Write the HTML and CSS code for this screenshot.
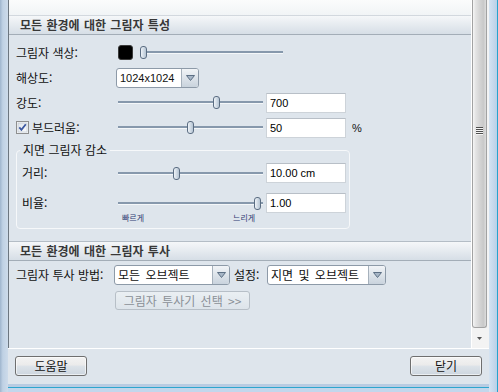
FILE: index.html
```html
<!DOCTYPE html>
<html lang="ko">
<head>
<meta charset="utf-8">
<title>그림자 특성</title>
<link rel="stylesheet" href="styles.css">
</head>
<body>
<div class="frame-left"></div>
<div class="main">
  <div class="pane">
    <div class="content">
      <div class="top-strip"></div>
      <div class="section-head">모든 환경에 대한 그림자 특성</div>
      <div class="form">
        <div class="row">
          <span class="label">그림자 색상:</span>
          <span class="swatch"></span>
          <div class="slider slider-color"><span class="thumb" style="left:0px"></span></div>
        </div>
        <div class="row">
          <span class="label label-select">해상도:</span>
          <div class="select select-res">
            <span class="select-text latin">1024x1024</span>
            <span class="select-btn"><svg width="9" height="6" viewBox="0 0 9 6"><polygon points="0.5,0.5 8.5,0.5 4.5,5.5" fill="#a7b6c6" stroke="#5c6f84" stroke-width="1"/></svg></span>
          </div>
        </div>
        <div class="row">
          <span class="label">강도:</span>
          <div class="slider"><span class="thumb" style="left:95px"></span></div>
          <input class="num" type="text" value="700">
        </div>
        <div class="row">
          <label class="label check-label">
            <svg class="checkbox" width="13" height="13" viewBox="0 0 13 13"><defs><linearGradient id="cb" x1="0" y1="0" x2="1" y2="1"><stop offset="0" stop-color="#dfe4ea"/><stop offset="1" stop-color="#fbfcfd"/></linearGradient></defs><rect x="0.5" y="0.5" width="12" height="12" fill="#f6f7f8" stroke="#8e8f8f"/><rect x="2" y="2" width="9" height="9" fill="url(#cb)" stroke="#b9c2cc" stroke-width="0.6"/><path d="M3.3 6.4 L5.4 8.8 L9.8 3.2" fill="none" stroke="#3c58a0" stroke-width="1.8"/></svg>
            <span>부드러움:</span>
          </label>
          <div class="slider"><span class="thumb" style="left:69px"></span></div>
          <input class="num" type="text" value="50">
          <span class="unit latin">%</span>
        </div>
        <fieldset class="group">
          <legend>지면 그림자 감소</legend>
          <div class="row group-row row-dist">
            <span class="label label-group">거리:</span>
            <div class="slider"><span class="thumb" style="left:55px"></span></div>
            <input class="num" type="text" value="10.00 cm">
          </div>
          <div class="row group-row row-ratio">
            <span class="label label-group">비율:</span>
            <div class="slider"><span class="thumb" style="left:136px"></span></div>
            <input class="num" type="text" value="1.00">
          </div>
          <div class="scale">
            <span>빠르게</span>
            <span>느리게</span>
          </div>
        </fieldset>
      </div>
      <div class="section-head section-head-2">모든 환경에 대한 그림자 투사</div>
      <div class="form form-2">
        <div class="row row-cast">
          <span class="label label-cast">그림자 투사 방법:</span>
          <div class="select select-cast">
            <span class="select-text">모든 오브젝트</span>
            <span class="select-btn"><svg width="9" height="6" viewBox="0 0 9 6"><polygon points="0.5,0.5 8.5,0.5 4.5,5.5" fill="#a7b6c6" stroke="#5c6f84" stroke-width="1"/></svg></span>
          </div>
          <span class="label-set">설정:</span>
          <div class="select select-set">
            <span class="select-text">지면 및 오브젝트</span>
            <span class="select-btn"><svg width="9" height="6" viewBox="0 0 9 6"><polygon points="0.5,0.5 8.5,0.5 4.5,5.5" fill="#a7b6c6" stroke="#5c6f84" stroke-width="1"/></svg></span>
          </div>
        </div>
        <div class="btn-disabled">그림자 투사기 선택 &gt;&gt;</div>
      </div>
    </div>
    <div class="scrollbar">
      <div class="sb-thumb">
        <span class="grip"></span>
      </div>
      <div class="sb-arrow"><svg width="5" height="3" viewBox="0 0 5 3"><polygon points="0,0 5,0 2.5,3" fill="#555"/></svg></div>
    </div>
  </div>
  <div class="footer">
    <div class="btn">도움말</div>
    <div class="btn">닫기</div>
  </div>
  <div class="frame-bottom"></div>
</div>
<div class="frame-right"></div>
</body>
</html>
```
FILE: styles.css
```css
* { box-sizing: border-box; }
html, body { margin: 0; padding: 0; }
body {
  width: 498px;
  height: 392px;
  overflow: hidden;
  display: flex;
  background: #bcd3ea;
  font-family: "Noto Sans CJK KR", "Noto Sans", sans-serif;
  font-size: 12px;
  color: #111;
}
.latin { font-family: "Liberation Sans", Arial, sans-serif; font-size: 11px; }

.frame-left {
  width: 8px;
  flex: none;
  background: linear-gradient(to right, #9fb5cd 0, #bfd1e4 35%, #cddbea 100%);
}
.frame-right {
  width: 9px;
  flex: none;
  background: linear-gradient(to right, #d5e3f1, #b9d0e8);
  border-right: 1px solid #27a3cd;
}
.main {
  width: 481px;
  flex: none;
  display: flex;
  flex-direction: column;
}
.pane {
  height: 348px;
  display: flex;
  border-left: 1px solid #6c7680;
}
.content {
  width: 462px;
  background: #dee5ec;
}
.top-strip {
  height: 15px;
  background: linear-gradient(#fbfcfc, #f1f4f6);
}
.section-head {
  height: 20px;
  border-top: 1px solid #d2d8de;
  border-bottom: 1px solid #a3adb7;
  background: linear-gradient(#f5f7f9, #d6dee6);
  padding-left: 11px;
  font-weight: bold;
  line-height: 18px;
  color: #383838;
  word-spacing: 1px;
}
.section-head-2 {
  margin-top: 12px;
  border-top-color: #b4bdc6;
}

.form { padding: 5px 0 0 7px; }
.row {
  display: flex;
  align-items: center;
  height: 25px;
}
.label {
  width: 102px;
  flex: none;
  line-height: 16px;
  white-space: nowrap;
}
.label-select { width: 100px; }
.label-group { width: 96px; }

.swatch {
  width: 15px;
  height: 15px;
  flex: none;
  background: #000;
  border: 1px solid #3a3a3a;
  border-radius: 3px;
}
.slider {
  position: relative;
  width: 145px;
  height: 13px;
  flex: none;
}
.slider-color { width: 143px; margin-left: 7px; }
.slider::before {
  content: "";
  position: absolute;
  left: 0;
  right: 0;
  top: 5px;
  height: 2px;
  background: #8698ac;
  box-shadow: 0 1px 0 #f4f7f9;
}
.thumb {
  position: absolute;
  top: 0;
  width: 7px;
  height: 13px;
  border: 1px solid #5b6d82;
  border-radius: 3px;
  background: linear-gradient(to right, #eef3f8, #b5c4d3);
}
.num {
  width: 80px;
  height: 20px;
  margin: 0 0 0 3px;
  padding: 0 0 0 3px;
  background: #fff;
  border: 1px solid #cdd3d9;
  border-top-color: #b8bfc7;
  font: 11px "Liberation Sans", Arial, sans-serif;
  line-height: 18px;
  color: #000;
  outline: none;
  flex: none;
}
.unit { margin-left: 6px; }

.check-label {
  display: flex;
  align-items: center;
  gap: 3px;
}
.checkbox { flex: none; }

.select {
  display: flex;
  height: 20px;
  border: 1px solid #8d9aa8;
  border-radius: 3px;
  background: #fff;
  flex: none;
  overflow: hidden;
}
.select-text {
  flex: 1;
  padding-left: 3px;
  line-height: 18px;
  white-space: nowrap;
  word-spacing: 2px;
}
.select-btn {
  width: 17px;
  flex: none;
  border-left: 1px solid #a6b1bc;
  background: linear-gradient(#f1f4f7, #c9d3dd);
  display: flex;
  align-items: center;
  justify-content: center;
}
.select-res { width: 83px; }

.group {
  margin: 2px 0 0 0;
  padding: 0 0 5px 5px;
  width: 334px;
  min-width: 0;
  border: 1px solid #f6f8fa;
  border-radius: 4px;
}
.group legend {
  padding: 0 3px;
  margin-left: -2px;
  line-height: 16px;
}
.group-row { height: 20px; }
.row-dist { margin-top: 5px; }
.row-ratio { margin-top: 10px; }
.scale {
  display: flex;
  height: 10px;
  padding-left: 100px;
  gap: 89px;
  font-size: 8px;
  line-height: 10px;
  color: #2f3c72;
}

.form-2 { padding-top: 4px; }
.row-cast { height: 20px; }
.label-cast { width: 98px; }
.select-cast { width: 116px; }
.label-set { width: 33px; margin-left: 4px; line-height: 16px; }
.select-set { width: 119px; }

.btn-disabled {
  margin: 6px 0 0 99px;
  width: 135px;
  height: 19px;
  border: 1px solid #b7bfc7;
  border-radius: 3px;
  background: linear-gradient(#eaeff3, #dde4ea);
  color: #8a9097;
  line-height: 17px;
  text-align: center;
  white-space: nowrap;
  word-spacing: 2px;
}

.scrollbar {
  width: 18px;
  flex: none;
  border-left: 1px solid #fff;
  padding-right: 2px;
  background: #f3f3f3;
  display: flex;
  flex-direction: column;
}
.sb-thumb {
  height: 328px;
  border: 1px solid #a2a2a2;
  border-top: none;
  border-radius: 0 0 3px 3px;
  background: linear-gradient(to right, #f6f6f6 0, #e4e4e4 20%, #d3d3d3 55%, #c9c9c9 80%, #dcdcdc 100%);
  display: flex;
  justify-content: center;
  padding-top: 127px;
}
.grip {
  width: 7px;
  height: 8px;
  background: repeating-linear-gradient(#4f4f4f 0 1px, #f5f5f5 1px 2px);
}
.sb-arrow {
  flex: 1;
  display: flex;
  align-items: center;
  justify-content: center;
}

.footer {
  height: 36px;
  border-top: 1px solid #fff;
  background: #dee5ec;
  display: flex;
  justify-content: space-between;
  padding: 7px 7px 0 7px;
}
.btn {
  width: 72px;
  height: 20px;
  border: 1px solid #6f6f6f;
  border-radius: 3px;
  background: linear-gradient(#f3f3f3 0, #ebebeb 45%, #dde3e9 50%, #cdd6df 100%);
  box-shadow: inset 0 0 0 1px rgba(255,255,255,0.6);
  line-height: 18px;
  text-align: center;
}
.frame-bottom {
  height: 8px;
  background: linear-gradient(#b8cce2 0 3px, #2ea6cf 3px 4px, #c2d7ec 4px);
}
```
